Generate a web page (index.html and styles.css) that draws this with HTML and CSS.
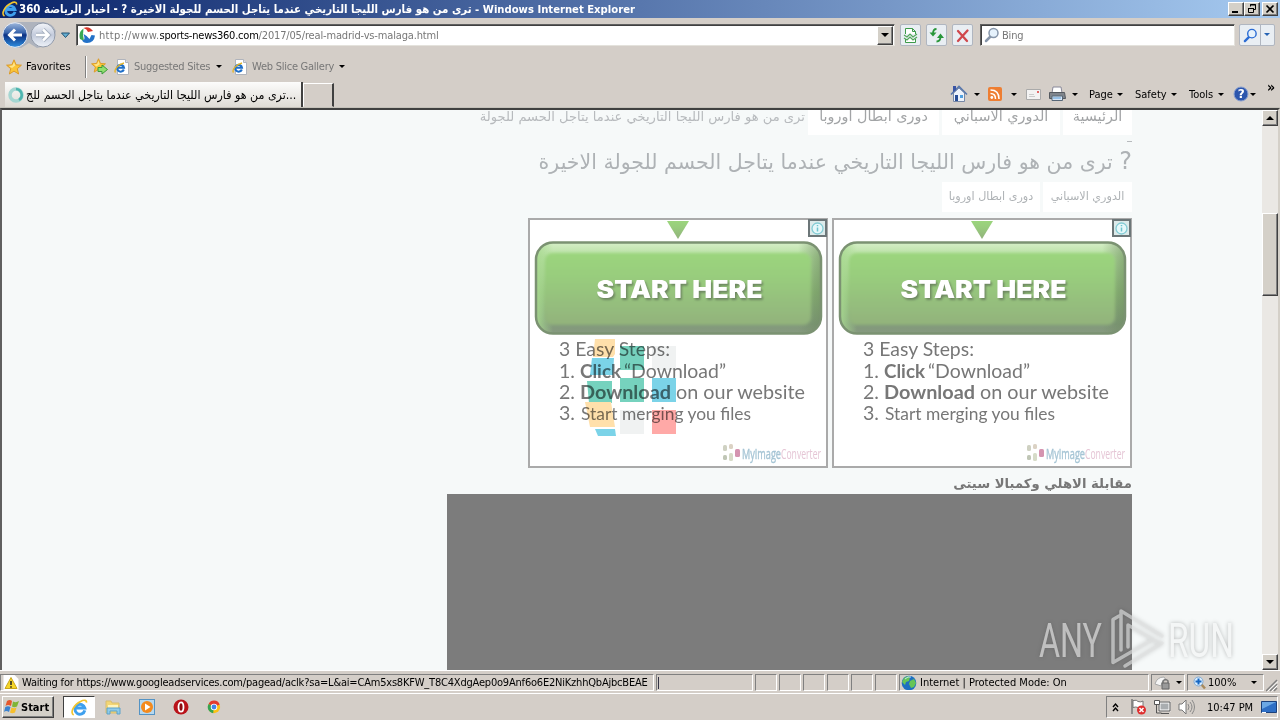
FILE: index.html
```html
<!DOCTYPE html>
<html lang="en">
<head>
    <meta charset="UTF-8">
    <title>Windows Internet Explorer</title>
    <link rel="stylesheet" href="styles.css">
</head>
<body>
    <svg class="defs" width="0" height="0">
        <defs>
            <linearGradient id="blueBall" x1="0" y1="0" x2="0" y2="1">
                <stop offset="0" stop-color="#9fb8dc"/><stop offset=".4" stop-color="#3a66ad"/><stop offset=".5" stop-color="#0b3183"/><stop offset="1" stop-color="#2f8fe0"/>
            </linearGradient>
            <linearGradient id="greyBall" x1="0" y1="0" x2="0" y2="1">
                <stop offset="0" stop-color="#f4f6fa"/><stop offset=".5" stop-color="#c3cbdc"/><stop offset="1" stop-color="#eef2f8"/>
            </linearGradient>
            <linearGradient id="green" x1="0" y1="0" x2="0" y2="1">
                <stop offset="0" stop-color="#9bd57d"/><stop offset=".35" stop-color="#98cc7d"/><stop offset="1" stop-color="#92b27c"/>
            </linearGradient>
            <linearGradient id="bevel" x1="0" y1="0" x2="0" y2="1">
                <stop offset="0" stop-color="#d6efc8"/><stop offset=".15" stop-color="#b5dfa0"/><stop offset=".55" stop-color="#8fbd78"/><stop offset=".9" stop-color="#80987a"/><stop offset="1" stop-color="#879a80"/>
            </linearGradient>
            <linearGradient id="side" x1="0" y1="0" x2="1" y2="0">
                <stop offset="0" stop-color="#a9da91" stop-opacity=".9"/><stop offset=".06" stop-color="#a9da91" stop-opacity="0"/><stop offset=".92" stop-color="#6d8a60" stop-opacity="0"/><stop offset="1" stop-color="#6d8a60" stop-opacity=".6"/>
            </linearGradient>
            <filter id="soft"><feGaussianBlur stdDeviation="1.6"/></filter>
            <filter id="shade"><feGaussianBlur stdDeviation=".8"/></filter>
        </defs>
        <symbol id="ie" viewBox="0 0 16 16">
            <path d="M13 10.800A4.700 4.700 0 1 1 13 8.500H5" fill="none" stroke="#3fa0ee" stroke-width="2.800"/>
            <path d="M2.500 15C-1.500 13 3 5 9 2.300c3-1.700 6-1.600 5.500 1.200" fill="none" stroke="#f3c52f" stroke-width="1.600"/>
        </symbol>
        <symbol id="iepage" viewBox="0 0 16 16">
            <path d="M3.500.5h8l3 3v12h-11z" fill="#fff" stroke="#b0b4bc"/>
            <path d="M11.500.5v3h3" fill="#dde" stroke="#b0b4bc"/>
            <path d="M9.800 10.500A3.400 3.400 0 1 1 10 8.800H4" fill="none" stroke="#1f6fc9" stroke-width="2.100"/>
            <path d="M1.500 13.500C-.5 11 4 5.500 10 4" fill="none" stroke="#e5b427" stroke-width="1.300"/>
        </symbol>
        <symbol id="star" viewBox="0 0 16 16">
            <path d="M8 .8l2.100 5 5.300.4-4.100 3.500 1.300 5.300L8 12.100l-4.600 2.900 1.300-5.300L.6 6.200l5.300-.4z" fill="#fbc536" stroke="#dc9a27"/>
            <path d="M8 3l1.300 3.600L6 9 3 7l3.500-.5z" fill="#ffe58c"/>
        </symbol>
        <symbol id="glass" viewBox="0 0 16 16">
            <path d="M6.500 9.500L2 14" stroke="currentColor" stroke-width="2.500" stroke-linecap="round"/>
            <circle cx="9.500" cy="6" r="4.500" fill="#e6f2fc" stroke="currentColor" stroke-width="1.500"/>
        </symbol>
        <symbol id="ad" viewBox="0 0 300 250">
            <rect x="1" y="1" width="298" height="248" fill="#fff" stroke="#aaa" stroke-width="2"/>
            <path d="M139 3h22l-11 18z" fill="url(#green)"/>
            <rect x="8" y="24.500" width="285" height="91" rx="17" fill="url(#bevel)"/>
            <rect x="8" y="24.500" width="285" height="91" rx="17" fill="url(#side)" stroke="#7b9272" stroke-width="2.500"/>
            <rect x="17" y="35" width="266" height="72" rx="8" fill="url(#green)" filter="url(#soft)"/>
            <g class="start">
                <text x="70" y="82" textLength="166" lengthAdjust="spacingAndGlyphs" fill="#6d8660" filter="url(#shade)" aria-hidden="true">START HERE</text>
                <text x="68.500" y="80" textLength="166" lengthAdjust="spacingAndGlyphs" fill="#fff">START HERE</text>
            </g>
            <g class="steps">
                <text x="31" y="138" textLength="111" lengthAdjust="spacingAndGlyphs">3 Easy Steps:</text>
                <text x="31" y="160" textLength="16" lengthAdjust="spacingAndGlyphs">1.</text>
                <text class="strong" x="52" y="160" textLength="41" lengthAdjust="spacingAndGlyphs">Click</text>
                <text x="96" y="160" textLength="102" lengthAdjust="spacingAndGlyphs">“Download”</text>
                <text x="31" y="181" textLength="16" lengthAdjust="spacingAndGlyphs">2.</text>
                <text class="strong" x="52" y="181" textLength="91" lengthAdjust="spacingAndGlyphs">Download</text>
                <text x="148" y="181" textLength="129" lengthAdjust="spacingAndGlyphs">on our website</text>
                <text x="31" y="202" textLength="16" lengthAdjust="spacingAndGlyphs">3.</text>
                <text class="small" x="53" y="202" textLength="170" lengthAdjust="spacingAndGlyphs">Start merging you files</text>
            </g>
            <g opacity=".55">
                <rect x="195" y="227" width="4" height="6" rx="1.500" fill="#a9ad91"/><rect x="201" y="226" width="4" height="5" rx="1.500" fill="#bfae95"/>
                <rect x="195" y="237" width="4" height="5" rx="1.500" fill="#8e997b"/><rect x="201" y="235" width="4" height="8" rx="1.500" fill="#b6bf9c"/>
                <rect x="207" y="231" width="5" height="8" rx="1.500" fill="#b13d71"/>
            </g>
            <text class="brand" x="214" y="241" textLength="39" lengthAdjust="spacingAndGlyphs" fill="#a6c5d5" stroke="#a6c5d5" stroke-width=".4">MyImage</text>
            <text class="brand" x="253" y="241" textLength="40" lengthAdjust="spacingAndGlyphs" fill="#e5c5d5">Converter</text>
            <rect x="281" y="2" width="17" height="16" fill="#dceaea" stroke="#6c7678" stroke-width="2"/>
            <circle cx="289.500" cy="10.500" r="5.500" fill="#e6f8fa" stroke="#83ccd5" stroke-width="1.300"/>
            <path d="M289.500 9.500v4M289.500 7v1.300" stroke="#6ec4cf" stroke-width="1.500"/>
        </symbol>
    </svg>

    <header class="titlebar">
        <svg class="title-icon" width="16" height="16"><use href="#ie"/></svg>
        <span class="title-text">ترى من هو فارس الليجا التاريخي عندما يتاجل الحسم للجولة الاخيرة ? - اخبار الرياضة 360<span class="title-app"> - Windows Internet Explorer</span></span>
        <div class="window-buttons">
            <button><svg width="14" height="12"><path d="M3 9h6" stroke="#000" stroke-width="2"/></svg></button>
            <button><svg width="14" height="12"><path d="M5.500 3.500v-2h5v5h-2M5 2h6M3.500 5.500h5v4h-5zM3 5.500h6" fill="none" stroke="#000"/></svg></button>
            <button class="close"><svg width="14" height="12"><path d="M3.500 2.500l7 7m0-7l-7 7" stroke="#000" stroke-width="1.700"/></svg></button>
        </div>
    </header>

    <div class="address-row">
        <svg class="nav" width="72" height="30" viewBox="0 0 72 30">
            <path d="M15 2h28q10 1 13 9l-2 7-5 7-12 3-8-5-8 5-12-2-7-9 2-9z" fill="#aeb3bd"/>
            <circle cx="15" cy="15" r="12.300" fill="url(#blueBall)" stroke="#e8ecf4"/>
            <path d="M22 15H10m5-5.500L9.500 15l5.500 5.500" fill="none" stroke="#fff" stroke-width="3"/>
            <circle cx="43" cy="15" r="12" fill="url(#greyBall)" stroke="#919aaa"/>
            <path d="M36 15h12m-5-5.500l5.500 5.500-5.500 5.500" fill="none" stroke="#a5afbf" stroke-width="4.500"/>
            <path d="M36 15h12m-5-5.500l5.500 5.500-5.500 5.500" fill="none" stroke="#fff" stroke-width="2.500"/>
            <path d="M61.500 13h8l-4 4.500z" fill="#65aed1" stroke="#235374"/>
        </svg>
        <div class="address">
            <svg width="16" height="16" viewBox="0 0 16 16">
                <path d="M4.500 1.500Q-1 5 1 12l4 2-1-6z" fill="#39a852"/>
                <path d="M4.500 1Q10-1.500 14 4L9 5Q8 2 4.500 1z" fill="#d8372c"/>
                <path d="M5 4q3 0 4 4 3-1 7 0 0 4-3 6.500L5 7z" fill="#fff"/>
                <path d="M4.500 7q4 2 6 5l2-4 3.500.5Q15 16 8 16q-4 0-5-3 4 1 1.500-6z" fill="#2472c8"/>
            </svg>
            <span class="url"><span class="scheme">http://www.</span><b>sports-news360.com</b><span class="path">/2017/05/real-madrid-vs-malaga.html</span></span>
            <button class="drop"><i class="arrow big"></i></button>
        </div>
        <button class="tool"><svg width="19" height="19" viewBox="0 0 19 19"><path d="M4.500 8V2.500h7l3 3V8M4.500 13v3.500h10V13M11.500 2.500v3h3" fill="#fff" stroke="#3d9a4a"/><path d="M3 9l3 2 3-3 3 3 4-3M3 12l3 2 3-3 3 3 4-3" fill="none" stroke="#52a75b" stroke-width="1.200"/></svg></button>
        <button class="tool"><svg width="19" height="19" viewBox="0 0 19 19"><path d="M9.500 3Q6 3 6 8M9.500 15.500q4 0 4-5" fill="none" stroke="#29963a" stroke-width="1.800"/><path d="M2.500 6.500h7L6 10.500zM10 12l3.500-4.500L17 12z" fill="#29963a"/></svg></button>
        <button class="tool"><svg width="19" height="19" viewBox="0 0 19 19"><path d="M5 5l9 10M14.500 4.500L5 15" stroke="#d0474c" stroke-width="2.300" stroke-linecap="round"/></svg></button>
        <div class="search"><svg width="16" height="16"><use href="#glass"/></svg><span>Bing</span></div>
        <div class="search-go"><svg width="15" height="15"><use href="#glass"/></svg><span><i class="arrow"></i></span></div>
    </div>

    <div class="favorites-row">
        <svg width="16" height="16"><use href="#star"/></svg>
        <span class="fav-label">Favorites</span>
        <span class="divider"></span>
        <svg class="add" width="17" height="17" viewBox="0 0 17 17"><use href="#star" width="15" height="15"/><path d="M7 9.500h4V7l5.500 4.500L11 16v-2.500H7z" fill="#90df6f" stroke="#3d9b3b"/></svg>
        <svg class="page" width="16" height="16"><use href="#iepage"/></svg>
        <span class="link sites">Suggested Sites</span><i class="arrow"></i>
        <svg class="page second" width="16" height="16"><use href="#iepage"/></svg>
        <span class="link slice">Web Slice Gallery</span><i class="arrow"></i>
    </div>

    <div class="tab-row">
        <div class="tab">
            <svg width="16" height="16" viewBox="0 0 16 16"><circle cx="8" cy="8" r="6" fill="none" stroke="#a5d6d2" stroke-width="3.500"/><path d="M8 2a6 6 0 0 1 3 11" fill="none" stroke="#4db5af" stroke-width="2.500"/></svg>
            <span>ترى من هو فارس الليجا التاريخي عندما يتاجل الحسم للج...</span>
        </div>
        <div class="new-tab"></div>
        <div class="commands">
            <svg class="home" width="18" height="18" viewBox="0 0 18 18"><path d="M3.500 8v8.500h11V8L9 3z" fill="#eef3fb" stroke="#7889a6"/><path d="M1 9.500l8-8 8 8" fill="none" stroke="#5877ac" stroke-width="1.600"/><path d="M3 1h3v4L3 7z" fill="#3a55a5"/><path d="M5 10h3v6H5z" fill="#294e96"/><path d="M10 10h3v3h-3z" fill="#51a0df"/></svg>
            <i class="arrow"></i>
            <svg class="rss" width="14" height="14" viewBox="0 0 14 14"><rect width="14" height="14" rx="2" fill="#ee7e32"/><circle cx="3.800" cy="10.500" r="1.400" fill="#fff"/><path d="M2.500 6.500q5 0 5 5.500M2.500 3Q11 3 11 12" fill="none" stroke="#fff" stroke-width="1.500"/></svg>
            <i class="arrow"></i>
            <svg class="mail" width="15" height="11" viewBox="0 0 15 11"><path d="M.5.500h14v10H.5z" fill="#f4f3f3" stroke="#aaa"/><path d="M11 2h2v2h-2z" fill="#e26868"/><path d="M3 5.500h5M3 7.500h6" stroke="#ccc"/></svg>
            <svg class="printer" width="17" height="16" viewBox="0 0 17 16"><path d="M4 1h8l1 6H3z" fill="#fff" stroke="#889"/><path d="M.5 6.500h15l1 6h-16z" fill="#80858c" stroke="#54595f"/><path d="M3 10h10.500v4.500H3z" fill="#d8e6f7" stroke="#567"/><path d="M4 12h8" stroke="#569bd5"/></svg>
            <i class="arrow"></i>
            <span class="cmd-page">Page</span><i class="arrow"></i>
            <span class="cmd-safety">Safety</span><i class="arrow"></i>
            <span class="cmd-tools">Tools</span><i class="arrow"></i>
            <svg class="help" width="16" height="16" viewBox="0 0 16 16"><circle cx="8" cy="8" r="7" fill="#2c56ad" stroke="#8aa0d0"/><text x="4.800" y="12.300" class="question">?</text></svg>
            <i class="arrow"></i>
            <span class="more">»</span>
        </div>
    </div>

    <main class="viewport">
        <div class="page-area">
            <article>
                <nav>
                    <a class="crumb c1">الرئيسية</a>
                    <a class="crumb c2">الدوري الاسباني</a>
                    <a class="crumb c3">دورى ابطال اوروبا</a>
                    <span class="crumb-last">ترى من هو فارس الليجا التاريخي عندما يتاجل الحسم للجولة</span>
                </nav>
                <div class="dash"></div>
                <h1><span class="mark">?</span> ترى من هو فارس الليجا التاريخي عندما يتاجل الحسم للجولة الاخيرة</h1>
                <div class="tags"><a class="t1">الدوري الاسباني</a><a class="t2">دورى ابطال اوروبا</a></div>
                <div class="ads">
                    <svg width="300" height="250"><use href="#ad"/></svg>
                    <svg width="300" height="250"><use href="#ad"/></svg>
                </div>
                <h2><span>مقابلة الاهلي وكمبالا سيتى</span></h2>
                <div class="video"></div>
            </article>
            <svg class="loader" width="100" height="100" viewBox="0 0 100 100">
                <path d="M15 1h20v15l-2 3H13z" fill="#ffe0ab"/><path d="M12 20h22l-1 17H10z" fill="#7bd3e8"/>
                <path d="M7 43h25v22H9z" fill="#76d2be"/><path d="M5 64h26l4 25H10z" fill="#ffe0ab"/><path d="M15 91h20l1 7H18z" fill="#7bd3e8"/>
                <path d="M40 8h24v24H40zM40 40h24v24H40z" fill="#76d2be"/><path d="M72 8h24v24H72zM40 72h24v24H40z" fill="#f0f2f2"/>
                <path d="M72 40h24v24H72z" fill="#7bd3e8"/><path d="M72 72h24v24H72z" fill="#ffa9a7"/>
            </svg>
            <svg class="watermark" width="206" height="66" viewBox="0 0 206 66">
                <text x="3" y="51" textLength="63" lengthAdjust="spacingAndGlyphs" fill="#fff" opacity=".55">ANY</text>
                <path d="M83 10l-6 3.500v43l38-22M85 44V5l41 25M92 41V19l31 18M89 60l37-23" fill="none" stroke="#dfe1e1" stroke-width="3.500" opacity=".65" stroke-linejoin="round" stroke-linecap="round"/>
                <text x="132" y="51" textLength="66" lengthAdjust="spacingAndGlyphs" fill="#f4f6f6">RUN</text>
            </svg>
        </div>
        <div class="scrollbar">
            <button><i class="arrow up big"></i></button>
            <div class="thumb"></div>
            <button class="down"><i class="arrow big"></i></button>
        </div>
    </main>

    <footer class="status">
        <div class="cell message">
            <svg width="16" height="16" viewBox="0 0 16 16"><path d="M.5 0h11l4 4v12H.5z" fill="#fff"/><path d="M8 2.500l6 11H2z" fill="#f6d629" stroke="#c9a51b"/><path d="M8 6v4M8 11.200v1.500" stroke="#222" stroke-width="1.500"/></svg>
            <span>Waiting for https://www.googleadservices.com/pagead/aclk?sa=L&amp;ai=CAm5xs8KFW_T8C4XdgAep0o9Anf6o6E2NiKzhhQbAjbcBEAE</span>
        </div>
        <div class="cell progress"></div>
        <div class="cell tiny"></div><div class="cell tiny"></div><div class="cell tiny"></div>
        <div class="cell tiny"></div><div class="cell tiny"></div><div class="cell tiny"></div>
        <div class="cell zone">
            <svg width="16" height="16" viewBox="0 0 16 16"><circle cx="8" cy="8" r="7.300" fill="#1d6fc0"/><path d="M3 3q4-3 6-1l-1 4-3 1-1 3-3-3zM9 6l4-2 2 4-2 4-3 1-2-4z" fill="#66c556"/><path d="M4 4q3-3 6-2" stroke="#bfe3fa" fill="none"/></svg>
            <span>Internet | Protected Mode: On</span>
        </div>
        <div class="cell lock">
            <svg width="18" height="16" viewBox="0 0 18 16"><path d="M1 9q2-7 9-7l2 3-4 2-1 4z" fill="#f5f5f5" stroke="#aaa"/><path d="M9 8V6q2.500-3 5 0v2" fill="none" stroke="#777" stroke-width="1.500"/><path d="M8 8h7v6H8z" fill="#999" stroke="#666"/></svg>
            <i class="arrow"></i>
        </div>
        <div class="cell zoom">
            <svg width="14" height="14" viewBox="0 0 14 14"><path d="M8 8l4 4.500" stroke="#a88a5c" stroke-width="2.500"/><circle cx="5.500" cy="5.500" r="4.500" fill="#d8edff" stroke="#81a9d2"/><path d="M5.500 2.500v6M2.500 5.500h6" stroke="#1767c2" stroke-width="2"/></svg>
            <span>100%</span><i class="arrow"></i>
        </div>
        <svg class="grip" width="12" height="14"><path d="M0 13L11 2M4 13l7-7M8 13l3-3" stroke="#808080" stroke-width="1.500"/><path d="M1.500 13.500L12 3.500M5.500 13.500l6-6" stroke="#fff"/></svg>
    </footer>

    <footer class="taskbar">
        <button class="start-button">
            <svg width="16" height="16" viewBox="0 0 16 16"><path d="M3 2q3-2 5 0L7 7Q4 5 1.500 7z" fill="#e6582c"/><path d="M9 2.500q3 1.500 6-.5l-2 5.500q-3 1.500-5 0z" fill="#7fb537"/><path d="M1.300 8Q4 6.500 6.500 8L5 13q-3-2-5 0z" fill="#3b82cf"/><path d="M7.500 8.500q3 1.500 5 0L11 13.500q-3 1.500-5 0z" fill="#f7bf2c"/></svg>
            <span>Start</span>
        </button>
        <div class="task-active"><svg width="17" height="17"><use href="#ie"/></svg></div>
        <svg class="quick" width="16" height="16" viewBox="0 0 16 16"><path d="M1 2h5l1 2h7v10H1z" fill="#f3d675" stroke="#d9bd6e"/><path d="M3 6h10v3H3z" fill="#fff4bc"/><path d="M2 9h13v6h-3v-3H5v3H2z" fill="#8ecbea" stroke="#5da2c9"/></svg>
        <svg class="quick" width="16" height="16" viewBox="0 0 16 16"><rect x=".5" y=".5" width="15" height="15" fill="#b6d8ef" stroke="#5493c4"/><circle cx="8" cy="8" r="6" fill="#f38a1e"/><path d="M6 4.500L11.500 8 6 11.500z" fill="#fff"/></svg>
        <svg class="quick" width="16" height="16" viewBox="0 0 16 16"><circle cx="8" cy="8" r="7.500" fill="#b91319"/><ellipse cx="8" cy="8" rx="2.500" ry="4.700" fill="#8b0b10" stroke="#fff" stroke-width="1.800"/></svg>
        <svg class="quick" width="14" height="14" viewBox="0 0 16 16"><circle cx="8" cy="8" r="7" fill="#fbc116"/><path d="M8 8L1.800 4.500A7 7 0 0 1 14.500 5z" fill="#e33b2e"/><path d="M8 8L1.800 4.500A7 7 0 0 0 7 15z" fill="#35a352"/><circle cx="8" cy="8" r="3.700" fill="#fff"/><circle cx="8" cy="8" r="2.800" fill="#4285e8"/></svg>
        <div class="tray">
            <svg width="8" height="11"><path d="M1 5l2.500-3L6 5M1 9l2.500-3L6 9" fill="none" stroke="#000" stroke-width="1.400"/></svg>
            <svg class="flag" width="17" height="16" viewBox="0 0 17 16"><path d="M2 0v15" stroke="#777" stroke-width="1.500"/><path d="M3 1.500q4-1 5 1 3 1 5-.5v7q-4 1-5-.5-2-1-5 0z" fill="#fff" stroke="#777"/><circle cx="11.500" cy="11" r="4.500" fill="#de2e2e"/><path d="M9.500 9l4 4m0-4l-4 4" stroke="#fff" stroke-width="1.500"/></svg>
            <svg class="net" width="17" height="16" viewBox="0 0 17 16"><path d="M5.500 3.500h10v8h-10z" fill="#a9adb0" stroke="#fff" stroke-width="2"/><path d="M5 3h11v9H5zM7 14.500h8M2.500 6v8h5" fill="none" stroke="#555"/><path d="M.5 1.500h5v4h-5z" fill="#fff" stroke="#555"/></svg>
            <svg class="sound" width="17" height="16" viewBox="0 0 17 16"><path d="M1 5h3l4-4v14l-4-4H1z" fill="#fff" stroke="#777"/><path d="M10 5q2 3 0 6M12 3q4 5 0 10M14 1q5 7 0 14" fill="none" stroke="#888"/></svg>
            <span class="clock">10:47 PM</span>
            <svg class="desktop" width="16" height="13" viewBox="0 0 16 13"><path d="M.5.500h15v11H.5z" fill="#2f6fc5" stroke="#1c417c"/><path d="M1 1h14L1 8z" fill="#6ca8e5"/><path d="M1 11.500h4" stroke="#fff"/></svg>
        </div>
    </footer>
</body>
</html>
```
FILE: styles.css
```css
* {
    box-sizing: border-box;
}

body {
    margin: 0;
    width: 1280px;
    height: 720px;
    overflow: hidden;
    display: flex;
    flex-direction: column;
    background: #d4cec8;
    font: 11px "DejaVu Sans Condensed", "DejaVu Sans", sans-serif;
    color: #000;
    white-space: nowrap;
}

svg, span, i {
    flex-shrink: 0;
}

svg {
    display: block;
}

.defs {
    position: absolute;
}

button {
    background: #d4d0c8;
    border: 1px solid;
    border-color: #fff #404040 #404040 #fff;
    box-shadow: inset -1px -1px #808080;
    border-radius: 0;
    padding: 0;
    display: flex;
    align-items: center;
    justify-content: center;
    font: inherit;
}

.arrow {
    width: 0;
    height: 0;
    border: 3px solid transparent;
    border-top-color: #000;
    border-bottom: 0;
}

.arrow.big {
    border-width: 4px;
    border-bottom: 0;
}

.arrow.up {
    border-top: 0;
    border-bottom: 4px solid #000;
}

/* title bar */
.titlebar {
    height: 18px;
    display: flex;
    align-items: center;
    padding: 0 2px;
    background: linear-gradient(to right, #0a246a, #a6caf0);
    color: #fff;
    font-weight: bold;
}

.title-text {
    margin-left: 1px;
    width: 900px;
    font-size: 11.4px;
}

.title-app {
    font-size: 11.2px;
}

.window-buttons {
    margin-left: auto;
    display: flex;
}

.window-buttons button {
    width: 16px;
    height: 14px;
}

.window-buttons .close {
    margin-left: 2px;
}

/* address bar */
.address-row {
    height: 34px;
    display: flex;
    align-items: center;
}

.nav {
    margin-right: 4px;
}

.address, .search {
    height: 22px;
    background: #fff;
    border: 1px solid;
    border-color: #606060 #e4e2dc #e4e2dc #606060;
    box-shadow: inset 1px 1px #404040;
    display: flex;
    align-items: center;
}

.address {
    width: 819px;
    padding: 0 1px 0 2px;
    margin-right: 5px;
}

.url {
    margin-left: 4px;
    color: #777;
}

.scheme {
    letter-spacing: .35px;
}

.url b {
    font-weight: normal;
    color: #000;
    letter-spacing: -.22px;
}

.path {
    letter-spacing: -.16px;
}

.drop {
    width: 16px;
    height: 19px;
    margin-left: auto;
}

.tool, .search-go {
    width: 21px;
    height: 22px;
    background: #e9eef3;
    border: 1px solid #b0b6c0;
    border-radius: 2px;
    box-shadow: none;
}

.tool {
    margin-right: 5px;
}

.search {
    width: 255px;
    margin: 0 4px 0 2px;
    padding-left: 3px;
    color: #777;
}

.search svg {
    color: #8796aa;
}

.search span {
    margin-left: 2px;
    letter-spacing: -.2px;
}

.search-go {
    width: 36px;
    display: flex;
    align-items: center;
    padding-left: 3px;
    color: #2b6cd4;
}

.search-go span {
    margin-left: 2px;
    height: 20px;
    padding: 8px 0 0 3px;
    border-left: 1px solid #b0b6c0;
}

.search-go .arrow {
    display: block;
    border-top-color: #2563b4;
}

/* favorites bar */
.favorites-row {
    height: 30px;
    display: flex;
    align-items: center;
    padding: 0 0 1px 6px;
}

.fav-label {
    width: 59px;
    margin-left: 4px;
}

.divider {
    width: 2px;
    height: 22px;
    border-left: 1px solid #808080;
    border-right: 1px solid #fff;
    margin-right: 4px;
}

.page {
    margin: 0 4px 0 6px;
}

.page.second {
    margin-left: 10px;
}

.link {
    color: #777;
    letter-spacing: -.25px;
}

.sites {
    width: 82px;
}

.slice {
    width: 87px;
}

/* tabs and command bar */
.tab-row {
    height: 26px;
    display: flex;
    align-items: flex-end;
    padding-left: 5px;
    border-bottom: 1px solid #c4c1b9;
}

.tab {
    width: 298px;
    height: 25px;
    display: flex;
    align-items: center;
    padding-left: 3px;
    background: linear-gradient(#fcfcfb, #dedbd5);
    border-right: 2px solid #404040;
}

.tab span {
    margin-left: 2px;
    font-size: 12.300px;
}

.new-tab {
    width: 31px;
    height: 24px;
    border: 1px solid;
    border-color: #fff #404040 transparent #fff;
    border-right-width: 2px;
}

.commands {
    flex: 1;
    height: 26px;
    display: flex;
    align-items: center;
    padding-left: 616px;
}

.home { margin-right: 6px; }
.rss { margin: 0 9px 0 8px; }
.mail { margin: 0 8px 0 9px; }
.printer { margin-right: 6px; }
.cmd-page { width: 28px; margin-left: 11px; }
.cmd-safety { width: 36px; margin-left: 12px; }
.cmd-tools { width: 29px; margin-left: 12px; }
.help { margin: 0 1px 0 9px; }

.question {
    font: bold 12px "DejaVu Sans", sans-serif;
    fill: #fff;
}

.more {
    margin: -14px 0 0 11px;
    font-size: 14px;
    font-weight: bold;
}

/* web page */
.viewport {
    height: 562px;
    display: flex;
    border: 1px solid #404040;
    border-width: 2px 2px 0;
    border-color: #404040 #d4d0c8 #fff #606060;
}

.page-area {
    position: relative;
    width: 1260px;
    overflow: hidden;
    background: #f6f9f9;
}

article {
    width: 685px;
    margin-left: 445px;
    direction: rtl;
    font-family: "DejaVu Sans", sans-serif;
    color: #aeb2b5;
}

nav {
    height: 25px;
    display: flex;
}

.crumb {
    height: 25px;
    background: #fff;
    margin-left: 3px;
    font-size: 14.400px;
    line-height: 13px;
    text-align: center;
    color: #a2a4a6;
}

.c1 { width: 69px; }
.c2 { width: 118px; }
.c3 { width: 131px; }

.crumb-last {
    font-size: 13.100px;
    line-height: 13px;
    color: #b7babd;
}

.dash {
    width: 5px;
    height: 1px;
    margin-top: 6px;
    background: #b7babd;
}

h1 {
    margin: 4px 0 0;
    height: 36px;
    line-height: 30px;
    font-size: 20.500px;
    font-weight: normal;
}

.mark {
    font-size: 24px;
}

.tags {
    display: flex;
    gap: 3px;
    height: 30px;
}

.tags a {
    background: #fff;
    text-align: center;
    font-size: 11.200px;
    line-height: 30px;
}

.t1 { width: 89px; }
.t2 { width: 98px; }

.ads {
    margin-top: 6px;
    display: flex;
    gap: 4px;
    direction: ltr;
    justify-content: flex-end;
}

.start {
    font: 900 24px Inter, "Open Sans", sans-serif;
}

.steps {
    font: 19px Lato, sans-serif;
    fill: #777;
}

.steps .strong {
    font-weight: bold;
}

.steps .small {
    font-size: 17px;
}

.brand {
    font: 14px "Open Sans", sans-serif;
}

h2 {
    margin: 0;
    height: 26px;
    line-height: 31px;
    font-size: 13.200px;
    color: #777;
}

.video {
    height: 180px;
    background: #7c7c7c;
}

.loader {
    position: absolute;
    left: 578px;
    top: 228px;
    mix-blend-mode: multiply;
}

.watermark {
    position: absolute;
    left: 1034px;
    top: 496px;
    font: 400 49px Roboto, sans-serif;
    filter: drop-shadow(0 0 2px rgba(0, 0, 0, .25));
}

.scrollbar {
    width: 16px;
    background: #eae8e4;
    display: flex;
    flex-direction: column;
}

.scrollbar button {
    height: 16px;
}

.thumb {
    margin-top: 87px;
    height: 83px;
    background: #d4d0c8;
    border: 1px solid;
    border-color: #fff #404040 #404040 #fff;
    box-shadow: inset -1px -1px #808080;
}

.scrollbar .down {
    margin-top: auto;
}

/* status bar */
.status {
    height: 24px;
    padding: 3px 0 2px;
    display: flex;
    gap: 2px;
    border-top: 1px solid #fff;
    border-bottom: 1px solid #fff;
}

.cell {
    border: 1px solid;
    border-color: #808080 #fff #fff #808080;
    display: flex;
    align-items: center;
    overflow: hidden;
}

.message {
    width: 654px;
    padding-left: 2px;
}

.message span, .zone span {
    margin-left: 3px;
}

.message span {
    letter-spacing: -.2px;
}

.progress {
    width: 97px;
    padding-left: 1px;
}

.progress::before {
    content: "";
    width: 1px;
    height: 12px;
    background: #334;
}

.tiny { width: 22px; }

.zone {
    width: 250px;
    padding-left: 1px;
}

.lock {
    width: 34px;
    padding-left: 2px;
}

.lock .arrow { margin-left: 4px; }

.zoom {
    width: 77px;
    padding-left: 5px;
}

.zoom span {
    width: 43px;
    margin-left: 1px;
}

.grip {
    margin-top: 4px;
}

/* taskbar */
.taskbar {
    height: 26px;
    display: flex;
    align-items: center;
    padding: 0 2px;
}

.start-button {
    width: 52px;
    height: 22px;
    font-weight: bold;
    justify-content: flex-start;
    padding-left: 1px;
}

.start-button span {
    margin-left: 1px;
}

.task-active {
    width: 32px;
    height: 22px;
    margin: 0 10px 0 9px;
    display: flex;
    align-items: center;
    justify-content: center;
    background: #fff;
    border: 1px solid;
    border-color: #404040 #fff #fff #404040;
}

.quick {
    margin-right: 18px;
}

.tray {
    width: 172px;
    height: 22px;
    margin-left: auto;
    display: flex;
    align-items: center;
    border: 1px solid;
    border-color: #808080 #fff #fff #808080;
    padding-left: 5px;
}

.flag { margin-left: 10px; }
.net { margin-left: 7px; }
.sound { margin-left: 7px; }

.clock {
    width: 46px;
    margin-left: 12px;
}

.desktop {
    margin-left: auto;
}
```
